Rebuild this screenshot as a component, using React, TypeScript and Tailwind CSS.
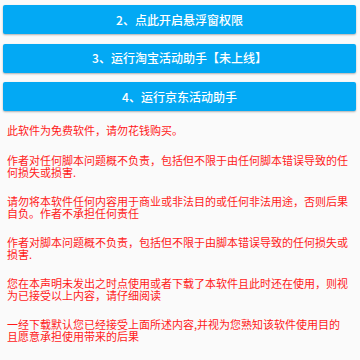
import React from "react";

const buttons = ["2、点此开启悬浮窗权限", "3、运行淘宝活动助手【未上线】", "4、运行京东活动助手"];

const notes = [
  "此软件为免费软件，请勿花钱购买。",
  "作者对任何脚本问题概不负责，包括但不限于由任何脚本错误导致的任何损失或损害.",
  "请勿将本软件任何内容用于商业或非法目的或任何非法用途，否则后果自负。作者不承担任何责任",
  "作者对脚本问题概不负责，包括但不限于由脚本错误导致的任何损失或损害.",
  "您在本声明未发出之时点使用或者下载了本软件且此时还在使用，则视为已接受以上内容，请仔细阅读",
  "一经下载默认您已经接受上面所述内容,并视为您熟知该软件使用目的且愿意承担使用带来的后果",
];

export default function App() {
  return (
    <div
      className="h-[360px] w-[360px] overflow-hidden bg-[#fafafa]"
      style={{ fontFamily: '"Noto Sans CJK SC", Roboto, sans-serif' }}
    >
      <div className="flex flex-col gap-[9.5px] pl-[3px] pr-[4px] pt-[5px]">
        {buttons.map((label) => (
          <button
            key={label}
            className="flex h-[29px] w-full items-center justify-center rounded-[2px] bg-[#03a9f4] text-[12px] font-medium text-white shadow-[0_1px_2px_rgba(0,0,0,0.3)]"
          >
            {label}
          </button>
        ))}
      </div>

      <div className="mt-[13px] flex flex-col gap-[16px] pl-[7px] pr-[9px] text-[11px] leading-[12.5px] text-[#ff1a1a]">
        {notes.map((t, i) => (
          <p key={i} className={i === 0 ? "mb-[1px]" : ""}>
            {t}
          </p>
        ))}
      </div>
    </div>
  );
}
